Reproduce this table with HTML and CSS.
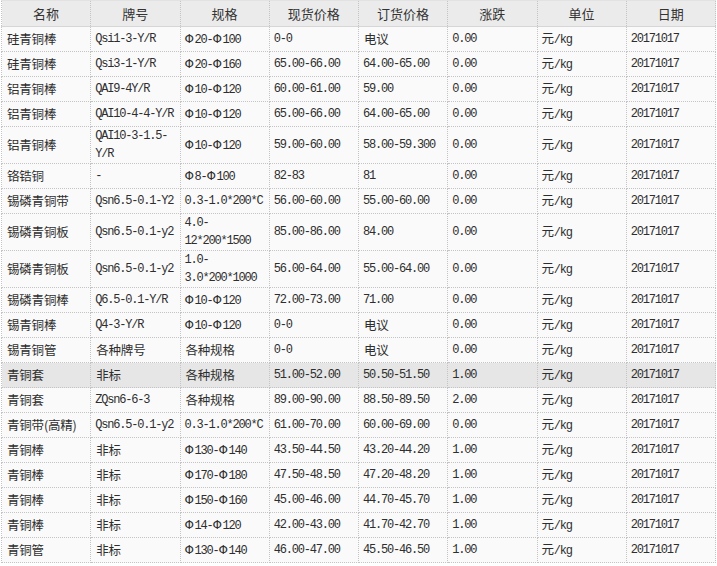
FILE: index.html
```html
<!DOCTYPE html>
<html lang="zh-CN">
<head>
<meta charset="utf-8">
<title>青铜价格</title>
<link rel="stylesheet" href="styles.css">
</head>
<body>
<table class="price-table">
  <colgroup>
    <col><col><col><col><col><col><col><col>
  </colgroup>
  <thead>
    <tr>
      <th>名称</th><th>牌号</th><th>规格</th><th>现货价格</th><th>订货价格</th><th>涨跌</th><th>单位</th><th>日期</th>
    </tr>
  </thead>
  <tbody>
    <tr><td class="zh">硅青铜棒</td><td>Qsi1-3-Y/R</td><td><span class="phi">Φ</span>20-<span class="phi">Φ</span>100</td><td>0-0</td><td class="zh">电议</td><td>0.00</td><td><span class="zh">元</span>/kg</td><td>20171017</td></tr>
    <tr><td class="zh">硅青铜棒</td><td>Qsi3-1-Y/R</td><td><span class="phi">Φ</span>20-<span class="phi">Φ</span>160</td><td>65.00-66.00</td><td>64.00-65.00</td><td>0.00</td><td><span class="zh">元</span>/kg</td><td>20171017</td></tr>
    <tr><td class="zh">铝青铜棒</td><td>QAI9-4Y/R</td><td><span class="phi">Φ</span>10-<span class="phi">Φ</span>120</td><td>60.00-61.00</td><td>59.00</td><td>0.00</td><td><span class="zh">元</span>/kg</td><td>20171017</td></tr>
    <tr><td class="zh">铝青铜棒</td><td>QAI10-4-4-Y/R</td><td><span class="phi">Φ</span>10-<span class="phi">Φ</span>120</td><td>65.00-66.00</td><td>64.00-65.00</td><td>0.00</td><td><span class="zh">元</span>/kg</td><td>20171017</td></tr>
    <tr><td class="zh">铝青铜棒</td><td>QAI10-3-1.5-<wbr>Y/R</td><td><span class="phi">Φ</span>10-<span class="phi">Φ</span>120</td><td>59.00-60.00</td><td>58.00-59.300</td><td>0.00</td><td><span class="zh">元</span>/kg</td><td>20171017</td></tr>
    <tr><td class="zh">铬锆铜</td><td>-</td><td><span class="phi">Φ</span>8-<span class="phi">Φ</span>100</td><td>82-83</td><td>81</td><td>0.00</td><td><span class="zh">元</span>/kg</td><td>20171017</td></tr>
    <tr><td class="zh">锡磷青铜带</td><td>Qsn6.5-0.1-Y2</td><td>0.3-1.0*200*C</td><td>56.00-60.00</td><td>55.00-60.00</td><td>0.00</td><td><span class="zh">元</span>/kg</td><td>20171017</td></tr>
    <tr><td class="zh">锡磷青铜板</td><td>Qsn6.5-0.1-y2</td><td>4.0-<wbr>12*200*1500</td><td>85.00-86.00</td><td>84.00</td><td>0.00</td><td><span class="zh">元</span>/kg</td><td>20171017</td></tr>
    <tr><td class="zh">锡磷青铜板</td><td>Qsn6.5-0.1-y2</td><td>1.0-<wbr>3.0*200*1000</td><td>56.00-64.00</td><td>55.00-64.00</td><td>0.00</td><td><span class="zh">元</span>/kg</td><td>20171017</td></tr>
    <tr><td class="zh">锡磷青铜棒</td><td>Q6.5-0.1-Y/R</td><td><span class="phi">Φ</span>10-<span class="phi">Φ</span>120</td><td>72.00-73.00</td><td>71.00</td><td>0.00</td><td><span class="zh">元</span>/kg</td><td>20171017</td></tr>
    <tr><td class="zh">锡青铜棒</td><td>Q4-3-Y/R</td><td><span class="phi">Φ</span>10-<span class="phi">Φ</span>120</td><td>0-0</td><td class="zh">电议</td><td>0.00</td><td><span class="zh">元</span>/kg</td><td>20171017</td></tr>
    <tr><td class="zh">锡青铜管</td><td class="zh">各种牌号</td><td class="zh">各种规格</td><td>0-0</td><td class="zh">电议</td><td>0.00</td><td><span class="zh">元</span>/kg</td><td>20171017</td></tr>
    <tr class="is-hover"><td class="zh">青铜套</td><td class="zh">非标</td><td class="zh">各种规格</td><td>51.00-52.00</td><td>50.50-51.50</td><td>1.00</td><td><span class="zh">元</span>/kg</td><td>20171017</td></tr>
    <tr><td class="zh">青铜套</td><td>ZQsn6-6-3</td><td class="zh">各种规格</td><td>89.00-90.00</td><td>88.50-89.50</td><td>2.00</td><td><span class="zh">元</span>/kg</td><td>20171017</td></tr>
    <tr><td class="zh">青铜带(高精)</td><td>Qsn6.5-0.1-y2</td><td>0.3-1.0*200*C</td><td>61.00-70.00</td><td>60.00-69.00</td><td>0.00</td><td><span class="zh">元</span>/kg</td><td>20171017</td></tr>
    <tr><td class="zh">青铜棒</td><td class="zh">非标</td><td><span class="phi">Φ</span>130-<span class="phi">Φ</span>140</td><td>43.50-44.50</td><td>43.20-44.20</td><td>1.00</td><td><span class="zh">元</span>/kg</td><td>20171017</td></tr>
    <tr><td class="zh">青铜棒</td><td class="zh">非标</td><td><span class="phi">Φ</span>170-<span class="phi">Φ</span>180</td><td>47.50-48.50</td><td>47.20-48.20</td><td>1.00</td><td><span class="zh">元</span>/kg</td><td>20171017</td></tr>
    <tr><td class="zh">青铜棒</td><td class="zh">非标</td><td><span class="phi">Φ</span>150-<span class="phi">Φ</span>160</td><td>45.00-46.00</td><td>44.70-45.70</td><td>1.00</td><td><span class="zh">元</span>/kg</td><td>20171017</td></tr>
    <tr><td class="zh">青铜棒</td><td class="zh">非标</td><td><span class="phi">Φ</span>14-<span class="phi">Φ</span>120</td><td>42.00-43.00</td><td>41.70-42.70</td><td>1.00</td><td><span class="zh">元</span>/kg</td><td>20171017</td></tr>
    <tr><td class="zh">青铜管</td><td class="zh">非标</td><td><span class="phi">Φ</span>130-<span class="phi">Φ</span>140</td><td>46.00-47.00</td><td>45.50-46.50</td><td>1.00</td><td><span class="zh">元</span>/kg</td><td>20171017</td></tr>
  </tbody>
</table>
</body>
</html>
```

FILE: styles.css
```css
html, body {
  margin: 0;
  padding: 0;
  background: #ffffff;
}

.price-table {
  border-collapse: collapse;
  table-layout: fixed;
  width: 715px;
  margin: 0 0 0 1px;
  color: #333333;
}

.price-table th {
  height: 25px;
  padding: 0 4px;
  font: 13px/18px "Noto Sans CJK SC", "Liberation Sans", sans-serif;
  font-weight: normal;
  text-align: center;
  color: #333333;
  background: #ebebeb;
  border-top: 1px solid #e2e2e2;
  border-left: 1px dotted #c4c4c4;
  border-right: 1px dotted #c4c4c4;
  border-bottom: 1px solid #d6d6d6;
}

.price-table td {
  height: 24px;
  padding: 0 4px;
  font: 12px/18px "Liberation Mono", "Noto Sans CJK SC", monospace;
  letter-spacing: -1.2px;
  text-align: left;
  vertical-align: middle;
  color: #2e2e2e;
  background: #fafafa;
  border: 1px dotted #c4c4c4;
  word-wrap: break-word;
}

.price-table td.zh,
.price-table .zh {
  font-family: "Noto Sans CJK SC", "Liberation Sans", sans-serif;
  font-size: 12.5px;
  letter-spacing: -0.2px;
}

.price-table td.zh {
  padding-left: 5px;
}

.phi {
  font-family: "DejaVu Sans", sans-serif;
  letter-spacing: 0.5px;
}

.price-table tr.is-hover td {
  background: #e6e6e6;
}
```
